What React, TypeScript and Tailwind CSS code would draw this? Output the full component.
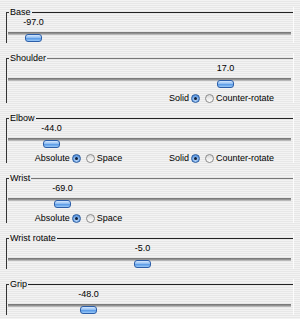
import { ReactNode } from "react"

type Radio = { options: [string, string]; selected: 0 | 1 }

type Joint = {
  name: string
  value: string
  thumb: number // px from track start
  line: string
  left?: Radio
  right?: Radio
}

const joints: Joint[] = [
  { name: "Base", value: "-97.0", thumb: 17, line: "bg-[#222]" },
  { name: "Shoulder", value: "17.0", thumb: 209, line: "bg-[#777]", right: { options: ["Solid", "Counter-rotate"], selected: 0 } },
  {
    name: "Elbow", value: "-44.0", thumb: 35, line: "bg-[#222]",
    left: { options: ["Absolute", "Space"], selected: 0 },
    right: { options: ["Solid", "Counter-rotate"], selected: 0 },
  },
  { name: "Wrist", value: "-69.0", thumb: 46, line: "bg-[#777]", left: { options: ["Absolute", "Space"], selected: 0 } },
  { name: "Wrist rotate", value: "-5.0", thumb: 126, line: "bg-[#222]" },
  { name: "Grip", value: "-48.0", thumb: 72, line: "bg-[#222]" },
]

function RadioDot({ on }: { on: boolean }) {
  return on ? (
    <span className="w-[9px] h-[9px] rounded-full border border-[#2f5f9f] bg-[radial-gradient(circle_at_50%_65%,#cfe3fb_0%,#6fa6e8_55%,#3a76c8_100%)] flex items-center justify-center">
      <span className="w-[3px] h-[3px] rounded-full bg-[#10203a]" />
    </span>
  ) : (
    <span className="w-[9px] h-[9px] rounded-full border border-[#8a8a8a] bg-[linear-gradient(to_bottom,#d8d8d8,#ffffff)]" />
  )
}

function RadioGroup({ r }: { r?: Radio }) {
  if (!r) return <div />
  return (
    <div className="flex items-center justify-center gap-[2px]">
      <span>{r.options[0]}</span>
      <RadioDot on={r.selected === 0} />
      <span className="w-[1px]" />
      <RadioDot on={r.selected === 1} />
      <span>{r.options[1]}</span>
    </div>
  )
}

function Titled({ title, line, children }: { title: string; line: string; children: ReactNode }) {
  return (
    <div className="ml-[6px] w-[288px]">
      <div className="flex h-[10px] items-center">
        <span className="self-start mt-[5px] h-[5px] w-[3px] border-l border-t border-[#333]" />
        <span className="leading-[10px] px-px">{title}</span>
        <span className={`flex-1 h-px ${line}`} />
        <span className="self-stretch w-px bg-white/80" />
      </div>
      <div className="border-l border-[#333] border-r border-r-white/80">{children}</div>
    </div>
  )
}

function Panel({ j }: { j: Joint }) {
  const radios = j.left || j.right
  return (
    <section className={radios ? "h-[60px] pt-[7px]" : "h-[46px] pt-[7px]"}>
      <Titled title={j.name} line={j.line}>
        <div className="h-[10px] leading-[10px] mx-px flex">
          <div className="w-[17px] flex justify-center whitespace-nowrap" style={{ marginLeft: j.thumb }}>
            {j.value}
          </div>
        </div>
        <div className="relative h-[11px] ml-px mr-[2px]">
          <div className="mt-[5px] h-[3px] bg-[linear-gradient(to_bottom,#6e6e6e,#9a9a9a_60%,#d0d0d0)]" />
          <div
            className="absolute top-[2px] h-[8px] w-[17px] rounded-[3px] border border-[#2c5ea8] bg-[linear-gradient(to_bottom,#d6e8fd_0%,#8fbdf2_45%,#5a9be6_60%,#9ccaf8_100%)]"
            style={{ left: j.thumb }}
          />
        </div>
        {radios && (
          <div className="mt-[4px] h-[10px] leading-[10px] grid grid-cols-2">
            <RadioGroup r={j.left} />
            <RadioGroup r={j.right} />
          </div>
        )}
      </Titled>
    </section>
  )
}

export default function App() {
  return (
    <div
      className="w-[300px] h-[319px] overflow-hidden text-[9px] text-black bg-[repeating-linear-gradient(to_bottom,#f3f3f3_0px,#f3f3f3_1px,#e7e7e7_1px,#e7e7e7_2px)]"
      style={{ fontFamily: '"Liberation Sans", Arial, sans-serif' }}
    >
      {joints.map((j) => <Panel key={j.name} j={j} />)}
    </div>
  )
}
